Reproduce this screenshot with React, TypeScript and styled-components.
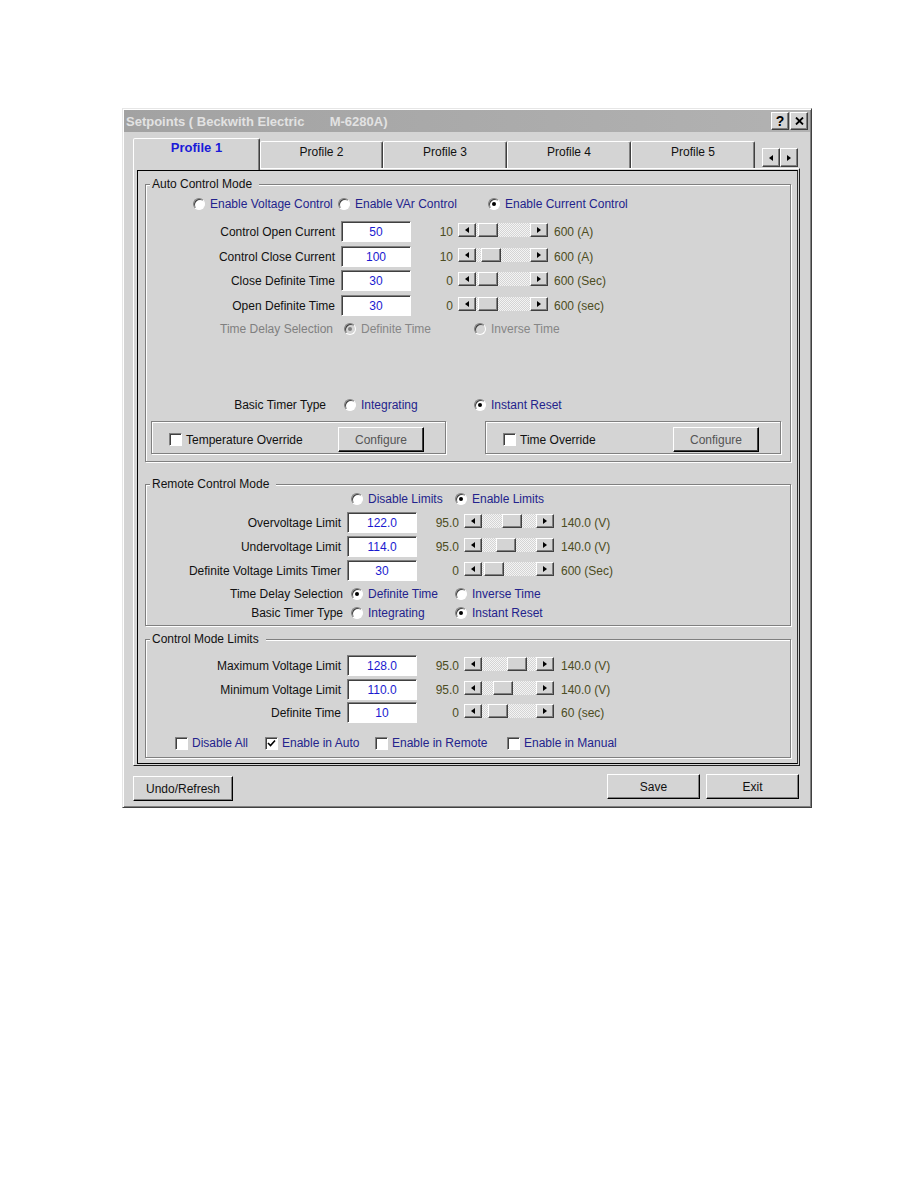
import React from 'react';
import styled, { createGlobalStyle, css } from 'styled-components';

const Global = createGlobalStyle`
  body {
    margin: 0;
    background: #fff;
    font-family: "Liberation Sans", Arial, sans-serif;
    font-size: 12px;
  }
`;

const FACE = '#d4d4d4';

const raised = css`
  border: 1px solid;
  border-color: #fff #404040 #404040 #fff;
  box-shadow: inset -1px -1px 0 #808080;
  background: ${FACE};
  box-sizing: border-box;
`;

const sunken = css`
  border: 1px solid;
  border-color: #808080 #fff #fff #808080;
  box-shadow: inset 1px 1px 0 #404040;
  box-sizing: border-box;
`;

const etched = css`
  border: 1px solid #808080;
  box-shadow: inset 1px 1px 0 #fff, 1px 1px 0 #fff;
`;

const Page = styled.div`
  padding: 108px 0 0 122px;
  min-height: 1188px;
  box-sizing: border-box;
`;

const Dialog = styled.div`
  width: 690px;
  height: 700px;
  box-sizing: border-box;
  background: ${FACE};
  border: 1px solid;
  border-color: #e6e6e6 #404040 #404040 #e6e6e6;
  box-shadow: inset 1px 1px 0 #fff, inset -1px -1px 0 #808080;
  padding: 1px;
  display: flex;
  flex-direction: column;
`;

const TitleBar = styled.div`
  height: 22px;
  flex: none;
  display: flex;
  align-items: center;
  padding: 0 2px 0 2px;
  background: linear-gradient(90deg, #a2a2a2, #b2b2b2);
`;

const TitleText = styled.span`
  flex: 1;
  color: #e2e2e2;
  font-weight: bold;
  font-size: 13px;
  white-space: pre;
`;

const CaptionButton = styled.div`
  ${raised};
  width: 18px;
  height: 18px;
  margin-left: 1px;
  display: flex;
  align-items: center;
  justify-content: center;
  font-weight: bold;
  font-size: 14px;
  color: #000;
`;

const TabStrip = styled.div`
  height: 30px;
  flex: none;
  margin: 6px 10px 0 9px;
  display: flex;
  align-items: flex-end;
  position: relative;
  z-index: 1;
`;

const Tab = styled.div<{ $w: number; $active?: boolean }>`
  width: ${p => p.$w}px;
  height: ${p => (p.$active ? 32 : 27)}px;
  margin-bottom: ${p => (p.$active ? -2 : 0)}px;
  box-sizing: border-box;
  background: ${FACE};
  border: 1px solid;
  border-bottom: none;
  border-color: #fff #404040 transparent #fff;
  border-radius: 2px 2px 0 0;
  box-shadow: inset -1px 0 0 #808080;
  text-align: center;
  padding-top: ${p => (p.$active ? 2 : 3)}px;
  line-height: 14px;
  color: ${p => (p.$active ? '#1a1ad8' : '#111')};
  font-weight: ${p => (p.$active ? 'bold' : 'normal')};
  font-size: ${p => (p.$active ? 13 : 12)}px;
`;

const TabArrows = styled.div`
  display: flex;
  margin: 0 0 1px 7px;
`;

const TabArrow = styled.div`
  ${raised};
  width: 18px;
  height: 19px;
  display: flex;
  align-items: center;
  justify-content: center;
`;

const Tri = styled.span<{ $dir: 'l' | 'r' }>`
  width: 0;
  height: 0;
  border-top: 3.5px solid transparent;
  border-bottom: 3.5px solid transparent;
  ${p =>
    p.$dir === 'l'
      ? 'border-right: 4px solid #000;'
      : 'border-left: 4px solid #000;'}
`;

const TabPanel = styled.div`
  flex: none;
  height: 598px;
  margin: 0 10px 0 9px;
  box-sizing: border-box;
  border: 1px solid;
  border-color: #fff #202020 #202020 #fff;
  padding: 1px 1px 1px 3px;
  display: flex;
`;

const Frame = styled.div`
  flex: 1;
  border: 1px solid #000;
  border-right-color: #303030;
  padding: 6px 6px 0 7px;
  display: flex;
  flex-direction: column;
`;

const Group = styled.fieldset<{ $mt: number; $pb: number }>`
  margin: ${p => p.$mt}px 0 0 0;
  padding: 0 0 ${p => p.$pb}px 0;
  min-width: 0;
  ${etched};
`;

const Legend = styled.legend`
  margin-left: 4px;
  padding: 0 7px 0 2px;
  line-height: 14px;
  background: ${FACE};
  color: #111;
`;

const Row = styled.div<{ $mt: number; $pl?: number }>`
  display: flex;
  align-items: center;
  height: 16px;
  margin-top: ${p => p.$mt}px;
  padding-left: ${p => p.$pl ?? 0}px;
  white-space: nowrap;
`;

const RowLabel = styled.span<{ $w: number; $pr: number; $muted?: boolean }>`
  width: ${p => p.$w}px;
  box-sizing: border-box;
  padding-right: ${p => p.$pr}px;
  text-align: right;
  color: ${p => (p.$muted ? '#808080' : '#111')};
`;

const Option = styled.span<{ $w?: number }>`
  display: flex;
  align-items: center;
  ${p => (p.$w ? `width: ${p.$w}px;` : '')}
  flex: none;
`;

const OptionText = styled.span<{ $muted?: boolean }>`
  color: ${p => (p.$muted ? '#868686' : '#23238c')};
`;

const RadioDot = styled.span<{ $on?: boolean; $muted?: boolean }>`
  ${sunken};
  width: 12px;
  height: 12px;
  border-radius: 50%;
  margin-right: 5px;
  background: ${p => (p.$muted ? FACE : '#fff')};
  display: flex;
  align-items: center;
  justify-content: center;
  &::after {
    content: '';
    width: 4px;
    height: 4px;
    border-radius: 50%;
    background: ${p => (p.$muted ? '#808080' : '#000')};
    display: ${p => (p.$on ? 'block' : 'none')};
  }
`;

const CheckBox = styled.span`
  ${sunken};
  width: 13px;
  height: 13px;
  margin-right: 4px;
  background: #fff;
  display: flex;
  align-items: center;
  justify-content: center;
`;

const FieldRow = styled.div<{ $mt: number }>`
  display: flex;
  align-items: center;
  height: 21px;
  margin-top: ${p => p.$mt}px;
  white-space: nowrap;
`;

const FieldLabel = styled.span<{ $w: number }>`
  width: ${p => p.$w}px;
  margin-right: 6px;
  text-align: right;
  color: #111;
`;

const ValueBox = styled.div`
  ${sunken};
  width: 70px;
  height: 21px;
  background: #fff;
  color: #1a1ad0;
  text-align: center;
  line-height: 20px;
`;

const MinText = styled.span`
  width: 42px;
  margin-right: 5px;
  text-align: right;
  color: #4c4c22;
`;

const MaxText = styled.span<{ $ml: number }>`
  margin-left: ${p => p.$ml}px;
  color: #4c4c22;
`;

const ScrollBar = styled.div`
  width: 90px;
  height: 14px;
  display: flex;
  margin-top: -3px;
`;

const ScrollArrow = styled.div`
  ${raised};
  width: 18px;
  height: 14px;
  flex: none;
  display: flex;
  align-items: center;
  justify-content: center;
`;

const Track = styled.div`
  flex: 1;
  display: flex;
  background: repeating-conic-gradient(#f4f4f4 0 25%, ${FACE} 0 50%) 0 0 / 2px 2px;
`;

const TrackGap = styled.span`
  flex: none;
`;

const Thumb = styled.div`
  ${raised};
  width: 20px;
  height: 14px;
  flex: none;
`;

const SubRow = styled.div`
  display: flex;
  gap: 39px;
  margin: 8px 0 0 5px;
`;

const SubGroup = styled.div<{ $w: number }>`
  ${etched};
  width: ${p => p.$w}px;
  height: 33px;
  box-sizing: border-box;
  padding: 4px 21px 0 17px;
  display: flex;
  align-items: center;
  justify-content: space-between;
  white-space: nowrap;
  color: #111;
`;

const Button = styled.button<{ $w: number; $mt?: number; $muted?: boolean }>`
  ${raised};
  width: ${p => p.$w}px;
  height: 25px;
  margin-top: ${p => p.$mt ?? 0}px;
  padding: 0;
  font-family: "Liberation Sans", Arial, sans-serif;
  font-size: 12px;
  color: ${p => (p.$muted ? '#555' : '#111')};
  border-color: #fff #000 #000 #fff;
  ${p => (p.$muted ? 'box-shadow: inset -1px -1px 0 #404040;' : '')}
`;

const Footer = styled.div`
  display: flex;
  align-items: flex-start;
  padding: 0 11px 0 9px;
`;

const FooterRight = styled.div`
  margin-left: auto;
  display: flex;
  gap: 6px;
`;

type Field = {
  label: string;
  value: string;
  min: string;
  max: string;
  lo: number;
  hi: number;
  v: number;
  mt: number;
};

const autoFields: Field[] = [
  { label: 'Control Open Current', value: '50', min: '10', max: '600 (A)', lo: 10, hi: 600, v: 50, mt: 9 },
  { label: 'Control Close Current', value: '100', min: '10', max: '600 (A)', lo: 10, hi: 600, v: 100, mt: 4 },
  { label: 'Close Definite Time', value: '30', min: '0', max: '600 (Sec)', lo: 0, hi: 600, v: 30, mt: 3 },
  { label: 'Open Definite Time', value: '30', min: '0', max: '600 (sec)', lo: 0, hi: 600, v: 30, mt: 4 },
];

const remoteFields: Field[] = [
  { label: 'Overvoltage Limit', value: '122.0', min: '95.0', max: '140.0 (V)', lo: 95, hi: 140, v: 122, mt: 5 },
  { label: 'Undervoltage Limit', value: '114.0', min: '95.0', max: '140.0 (V)', lo: 95, hi: 140, v: 114, mt: 3 },
  { label: 'Definite Voltage Limits Timer', value: '30', min: '0', max: '600 (Sec)', lo: 0, hi: 600, v: 30, mt: 3 },
];

const limitFields: Field[] = [
  { label: 'Maximum Voltage Limit', value: '128.0', min: '95.0', max: '140.0 (V)', lo: 95, hi: 140, v: 128, mt: 9 },
  { label: 'Minimum Voltage Limit', value: '110.0', min: '95.0', max: '140.0 (V)', lo: 95, hi: 140, v: 110, mt: 3 },
  { label: 'Definite Time', value: '10', min: '0', max: '60 (sec)', lo: 0, hi: 60, v: 10, mt: 2 },
];

const Scroll = ({ lo, hi, v }: { lo: number; hi: number; v: number }) => {
  const offset = Math.round(((v - lo) / (hi - lo)) * 34);
  return (
    <ScrollBar>
      <ScrollArrow>
        <Tri $dir="l" />
      </ScrollArrow>
      <Track>
        <TrackGap style={{ width: offset }} />
        <Thumb />
      </Track>
      <ScrollArrow>
        <Tri $dir="r" />
      </ScrollArrow>
    </ScrollBar>
  );
};

const Fields = ({ items, labelW, maxGap }: { items: Field[]; labelW: number; maxGap: number }) => (
  <>
    {items.map(f => (
      <FieldRow key={f.label} $mt={f.mt}>
        <FieldLabel $w={labelW}>{f.label}</FieldLabel>
        <ValueBox>{f.value}</ValueBox>
        <MinText>{f.min}</MinText>
        <Scroll lo={f.lo} hi={f.hi} v={f.v} />
        <MaxText $ml={maxGap}>{f.max}</MaxText>
      </FieldRow>
    ))}
  </>
);

const Radio = ({ text, on, muted, w }: { text: string; on?: boolean; muted?: boolean; w?: number }) => (
  <Option $w={w}>
    <RadioDot $on={on} $muted={muted} />
    <OptionText $muted={muted}>{text}</OptionText>
  </Option>
);

const Check = ({ text, on, w, plain }: { text: string; on?: boolean; w?: number; plain?: boolean }) => (
  <Option $w={w}>
    <CheckBox>
      {on && (
        <svg width="9" height="9" viewBox="0 0 9 9">
          <path d="M1 4 L3.5 6.5 L8 1.5" fill="none" stroke="#000" strokeWidth="1.6" />
        </svg>
      )}
    </CheckBox>
    {plain ? <span>{text}</span> : <OptionText>{text}</OptionText>}
  </Option>
);

export default function App() {
  return (
    <>
      <Global />
      <Page>
        <Dialog>
          <TitleBar>
            <TitleText>{'Setpoints ( Beckwith Electric       M-6280A)'}</TitleText>
            <CaptionButton>?</CaptionButton>
            <CaptionButton>
              <svg width="9" height="8" viewBox="0 0 9 8">
                <path d="M1 0.5 L8 7.5 M8 0.5 L1 7.5" stroke="#000" strokeWidth="1.8" />
              </svg>
            </CaptionButton>
          </TitleBar>

          <TabStrip>
            <Tab $w={127} $active>Profile 1</Tab>
            <Tab $w={123}>Profile 2</Tab>
            <Tab $w={124}>Profile 3</Tab>
            <Tab $w={124}>Profile 4</Tab>
            <Tab $w={124}>Profile 5</Tab>
            <TabArrows>
              <TabArrow>
                <Tri $dir="l" />
              </TabArrow>
              <TabArrow>
                <Tri $dir="r" />
              </TabArrow>
            </TabArrows>
          </TabStrip>

          <TabPanel>
            <Frame>
              <Group $mt={0} $pb={7}>
                <Legend>Auto Control Mode</Legend>
                <Row $mt={5} $pl={47}>
                  <Radio w={145} text="Enable Voltage Control" />
                  <Radio w={150} text="Enable VAr Control" />
                  <Radio text="Enable Current Control" on />
                </Row>
                <Fields items={autoFields} labelW={189} maxGap={6} />
                <Row $mt={5}>
                  <RowLabel $w={198} $pr={11} $muted>
                    Time Delay Selection
                  </RowLabel>
                  <Radio w={130} text="Definite Time" on muted />
                  <Radio text="Inverse Time" muted />
                </Row>
                <Row $mt={60}>
                  <RowLabel $w={198} $pr={18}>
                    Basic Timer Type
                  </RowLabel>
                  <Radio w={130} text="Integrating" />
                  <Radio text="Instant Reset" on />
                </Row>
                <SubRow>
                  <SubGroup $w={295}>
                    <Check text="Temperature Override" plain />
                    <Button $w={86} $muted>Configure</Button>
                  </SubGroup>
                  <SubGroup $w={296}>
                    <Check text="Time Override" plain />
                    <Button $w={86} $muted>Configure</Button>
                  </SubGroup>
                </SubRow>
              </Group>

              <Group $mt={15} $pb={4}>
                <Legend>Remote Control Mode</Legend>
                <Row $mt={0} $pl={205}>
                  <Radio w={104} text="Disable Limits" />
                  <Radio text="Enable Limits" on />
                </Row>
                <Fields items={remoteFields} labelW={195} maxGap={7} />
                <Row $mt={5}>
                  <RowLabel $w={205} $pr={8}>
                    Time Delay Selection
                  </RowLabel>
                  <Radio w={104} text="Definite Time" on />
                  <Radio text="Inverse Time" />
                </Row>
                <Row $mt={3}>
                  <RowLabel $w={205} $pr={8}>
                    Basic Timer Type
                  </RowLabel>
                  <Radio w={104} text="Integrating" />
                  <Radio text="Instant Reset" on />
                </Row>
              </Group>

              <Group $mt={6} $pb={6}>
                <Legend>Control Mode Limits</Legend>
                <Fields items={limitFields} labelW={195} maxGap={7} />
                <Row $mt={12} $pl={29}>
                  <Check w={90} text="Disable All" />
                  <Check w={110} text="Enable in Auto" on />
                  <Check w={132} text="Enable in Remote" />
                  <Check text="Enable in Manual" />
                </Row>
              </Group>
            </Frame>
          </TabPanel>

          <Footer>
            <Button $w={100} $mt={10}>Undo/Refresh</Button>
            <FooterRight>
              <Button $w={93} $mt={8}>Save</Button>
              <Button $w={93} $mt={8}>Exit</Button>
            </FooterRight>
          </Footer>
        </Dialog>
      </Page>
    </>
  );
}
